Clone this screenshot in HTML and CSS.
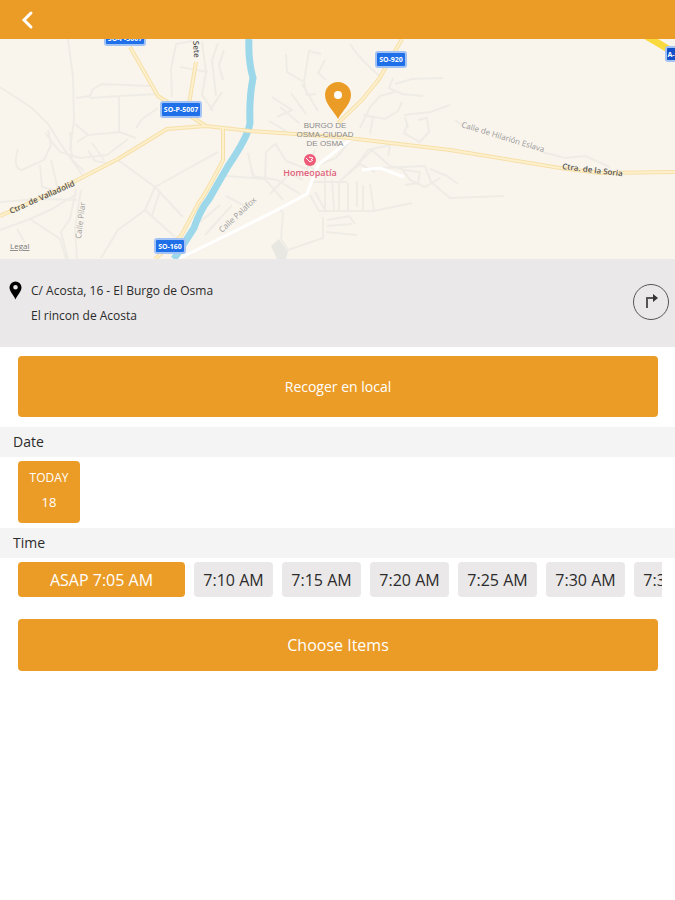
FILE: index.html
```
<!DOCTYPE html>
<html lang="es">
<head>
    <meta charset="UTF-8">
    <meta name="viewport" content="width=device-width, initial-scale=1.0">
    <title>Recoger en local</title>
    <link rel="stylesheet" href="styles.css">
</head>
<body>
    <header class="header">
        <button type="button" class="back-button" aria-label="Volver">
            <svg width="14" height="20" viewBox="0 0 14 20"><path d="M11 3 L4 10 L11 17"/></svg>
        </button>
    </header>
    <main>
        <section class="map" aria-label="Mapa">
            <svg class="map-canvas" viewBox="0 39 675 220" preserveAspectRatio="xMidYMid slice">
                <!-- Calles -->
                <g class="street">
                    <path d="M68 39 L73 77 L74 120 L70 150 M0 87 L32 108 L48 124 L60 143 L83 176 M76 98 L90 96 L93 89 L102 84 L150 86 M90 98 L119 96 L158 94 M119 96 V133 M75 124 L88 135 L120 132 L136 138 M88 135 L77 142 M136 128 L142 119 L158 108 M70 132 L72 160 L84 171"/>
                    <path d="M172 97 L171 69 L176 44 L192 41 M180 67 L208 72 M202 42 L206 72 L202 95 L213 111 M218 43 L212 60 L216 96 M224 50 L219 65 L223 80 M210 110 L222 92"/>
                    <path d="M18 149 Q12 168 22 170 L44 160 L51 145 L48 130 M40 165 L42 187 L54 190 M51 160 L58 190 M0 202 L40 199 L77 200 M0 230 L30 219 L50 210 L77 194 M17 229 L25 243 M30 219 L60 239 L66 259 M76 189 L70 219 L61 232 L68 259 M81 190 L75 228 L77 259 M45 133 L60 152 L80 158 L107 155 L128 139 M88 150 L95 161 L112 164 M92 143 L104 160 M118 160 L155 187 L183 217 M155 187 L180 173 L218 152 M155 187 L145 210 L118 230 L101 258 M145 210 L175 237 M160 190 L152 216"/>
                    <path d="M286 54 L287 72 L304 82 L309 51 L321 54 M304 82 L307 95 L316 94 M325 60 L318 73 L326 80 M272 97 L292 110 L277 117 M280 107 L299 123 M291 93 L306 114 M302 84 L318 111 M269 121 L289 133 M350 44 Q360 60 382 78 M393 78 L389 88 L402 94 L423 96 M395 84 L412 79 L443 78 M395 92 L380 96 L370 107 L360 128 M363 115 L385 119 L398 111 L402 102 M373 117 L370 134 M404 115 L430 112 L450 105 M408 128 L405 117 M418 120 L427 118 L429 132 L420 142 L404 133 L408 123"/>
                    <path d="M248 153 L253 176 L277 180 L300 194 M265 180 L266 152 L275 144 M275 143 L286 161 L307 169 L315 150 M283 200 L265 179 L226 176 M270 194 L290 173 L303 180 M318 175 L305 160 M316 166 L336 158 L351 140 M338 183 L355 167 L368 150 L390 145 L388 156 M347 175 L360 164 L375 172 M360 162 L372 150 L390 166 L402 169 L410 180 L425 187 L440 178 M404 170 L420 172 L418 183 L405 185 M310 182 L347 182 M315 192 L325 210 V176 M332 180 L334 210 M339 181 L339 211 M348 183 V211 M357 181 V207 M363 185 V211 M370 184 L374 211 M310 195 L319 211 L374 211 L412 203 M323 217 V238 L288 250 L281 239 L283 213 L279 208 M327 220 L350 216 M326 232 L357 235 M327 226 L352 224 M350 217 L355 224 M380 168 L425 166 L431 182 L450 198 L504 196 M430 169 L447 176 L458 184 M226 196 L245 206 M200 222 L220 205 M205 235 L232 205"/>
                    <path d="M455 120 L463 126 M542 152 L565 158 L585 156 L610 167"/>
                </g>
                <path class="plaza" d="M271 246 L279 239 L288 252 L286 259 H277 Z"/>
                <path class="lane" d="M178 259 L225 236 L275 211 L307 194 L318 165 L355 136 M362 170 L380 168 L404 177"/>
                <!-- Río -->
                <path class="river" d="M249 39 Q248 60 253 78 Q249 98 250 123 Q248 137 228 166 L209 199 Q200 210 194 228 L174 259"/>
                <!-- Carreteras -->
                <g class="road-edge">
                    <path d="M0 216 L60 189 L118 159 L167 129 L206 126 L250 131 L340 137 L450 150 L560 168 L600 173 L675 172"/>
                    <path d="M130 47 L158 96 L206 126 M196 62 L189 104 M223 128 V160 Q208 190 198 204 L181 236 L155 259 M402 39 L379 79 L362 100 L338 123"/>
                </g>
                <g class="road">
                    <path d="M0 216 L60 189 L118 159 L167 129 L206 126 L250 131 L340 137 L450 150 L560 168 L600 173 L675 172"/>
                    <path d="M130 47 L158 96 L206 126 M196 62 L189 104 M223 128 V160 Q208 190 198 204 L181 236 L155 259 M402 39 L379 79 L362 100 L338 123"/>
                </g>
                <path class="highway" d="M646 36 L675 53"/>
                <!-- Nombres de carreteras -->
                <g class="shield">
                    <rect x="105" y="30" width="40" height="15" rx="2"/>
                    <text x="125" y="41">SO-P-5007</text>
                    <rect x="161" y="102" width="40" height="15" rx="2"/>
                    <text x="181" y="112">SO-P-5007</text>
                    <rect x="376" y="52" width="30" height="15" rx="2"/>
                    <text x="391" y="62">SO-920</text>
                    <rect x="155" y="239" width="30" height="14" rx="2"/>
                    <text x="170" y="249">SO-160</text>
                    <rect class="motorway" x="666" y="47" width="20" height="14" rx="2"/>
                    <text x="675" y="57">A-11</text>
                </g>
                <g class="road-name">
                    <text transform="translate(11 214) rotate(-24)">Ctra. de Valladolid</text>
                    <text transform="translate(562 169) rotate(7)">Ctra. de la Soria</text>
                    <text transform="translate(193 41) rotate(86)">Sete</text>
                </g>
                <g class="street-name">
                    <text transform="translate(461 127) rotate(17)">Calle de Hilarión Eslava</text>
                    <text transform="translate(81 239) rotate(-83)">Calle Pilar</text>
                    <text transform="translate(222 233) rotate(-43)">Calle Palafox</text>
                </g>
                <g class="town">
                    <text x="325" y="128">BURGO DE</text>
                    <text x="325" y="137">OSMA-CIUDAD</text>
                    <text x="325" y="146">DE OSMA</text>
                </g>
                <g class="poi">
                    <circle cx="310" cy="160" r="6"/>
                    <path d="M306 158 l4 4 l3 -2 M309 157 l4 1 l-2 2"/>
                    <text x="310" y="176">Homeopatía</text>
                </g>
                <text class="legal" x="10" y="249">Legal</text>
                <path class="pin" d="M338 119 C334 111 325 104 325 95 A13 13 0 0 1 351 95 C351 104 342 111 338 119 Z"/>
                <circle class="pin-hole" cx="338" cy="95" r="4"/>
            </svg>
        </section>

        <section class="address">
            <svg class="address-icon" width="13" height="19" viewBox="0 0 13 19"><path fill-rule="evenodd" d="M6.500 18.500 C5 14.500 0.500 10.500 0.500 6.500 A6 6 0 0 1 12.500 6.500 C12.500 10.500 8 14.500 6.500 18.500 Z M6.500 4 a2.300 2.300 0 1 0 0 4.600 a2.300 2.300 0 0 0 0 -4.600 Z"/></svg>
            <div class="address-text">
                <p>C/ Acosta, 16 - El Burgo de Osma</p>
                <p>El rincon de Acosta</p>
            </div>
            <button type="button" class="directions-button" aria-label="Cómo llegar">
                <svg width="16" height="16" viewBox="0 0 16 16"><path class="turn" d="M4 14 V4 H11"/><path class="tip" d="M10 0 L15 4 L10 8 Z"/></svg>
            </button>
        </section>

        <button type="button" class="button pickup-button">Recoger en local</button>

        <h2>Date</h2>
        <div class="dates">
            <button type="button" class="date selected"><span>TODAY</span><span class="day">18</span></button>
        </div>

        <h2>Time</h2>
        <div class="times">
            <button type="button" class="time asap selected">ASAP 7:05 AM</button>
            <button type="button" class="time">7:10 AM</button>
            <button type="button" class="time">7:15 AM</button>
            <button type="button" class="time">7:20 AM</button>
            <button type="button" class="time">7:25 AM</button>
            <button type="button" class="time">7:30 AM</button>
            <button type="button" class="time">7:35 AM</button>
        </div>

        <button type="button" class="button choose-button">Choose Items</button>
    </main>
</body>
</html>
```
FILE: styles.css
```
/* Estilos generales */
* {
    box-sizing: border-box;
}

body {
    font-family: 'Open Sans', sans-serif;
    margin: 0;
    background-color: #fff;
    color: #2b2b2b;
}

button {
    font-family: inherit;
    border: none;
    padding: 0;
    cursor: pointer;
    color: inherit;
}

svg {
    display: block;
}

/* Encabezado */
.header {
    height: 39px;
    padding-left: 20px;
    background-color: #eb9c26;
    display: flex;
    align-items: center;
}

.back-button {
    background: none;
}

.back-button path {
    fill: none;
    stroke: #fff;
    stroke-width: 3;
    stroke-linecap: round;
}

/* Mapa */
.map {
    background-color: #f9f5ed;
}

.map-canvas {
    width: 100%;
    height: 220px;
}

.street {
    fill: none;
    stroke: #efece6;
    stroke-width: 2;
}

.lane {
    fill: none;
    stroke: #fff;
    stroke-width: 3;
}

.plaza {
    fill: #e9e7e1;
}

.river {
    fill: none;
    stroke: #9cd8ea;
    stroke-width: 7;
}

.road-edge {
    fill: none;
    stroke: #f7dfa8;
    stroke-width: 4;
}

.road {
    fill: none;
    stroke: #fdf0cd;
    stroke-width: 2;
}

.highway {
    stroke: #f9d93c;
    stroke-width: 7;
}

.shield rect {
    fill: #1e6fe8;
    stroke: #a4c3f5;
    stroke-width: 2;
}

.shield .motorway {
    fill: #1450c8;
}

.shield text {
    fill: #fff;
    font-size: 7px;
    font-weight: 700;
    text-anchor: middle;
}

.road-name {
    fill: #555;
    font-size: 8px;
    font-weight: 600;
}

.street-name {
    fill: #999;
    font-size: 8px;
}

.town {
    fill: #8c8c8c;
    font-family: 'Liberation Sans', sans-serif;
    font-size: 8px;
    text-anchor: middle;
}

.poi text {
    fill: #e0607a;
    font-size: 9px;
    font-weight: 600;
    text-anchor: middle;
}

.poi circle {
    fill: #ee5b78;
}

.poi path {
    fill: none;
    stroke: #fff;
}

.legal {
    fill: #777;
    font-size: 8px;
    text-decoration: underline;
}

.pin {
    fill: #eb9c26;
}

.pin-hole {
    fill: #fff;
}

/* Dirección */
.address {
    display: flex;
    align-items: flex-start;
    height: 88px;
    padding: 19px 6px 0 9px;
    background-color: #eae8e9;
}

.address-icon {
    margin-top: 3px;
}

.address-text {
    flex: 1;
    margin-left: 9px;
    font-size: 12px;
    line-height: 25px;
}

.address-text p {
    margin: 0;
}

.directions-button {
    display: flex;
    align-items: center;
    justify-content: center;
    width: 36px;
    height: 36px;
    margin-top: 6px;
    border: 1px solid #555;
    border-radius: 50%;
    background: none;
}

.turn {
    fill: none;
    stroke: #555;
    stroke-width: 2;
}

.tip {
    fill: #333;
}

/* Botones principales */
.button {
    display: block;
    width: calc(100% - 35px);
    margin-left: 18px;
    border-radius: 4px;
    background-color: #eb9c26;
    color: #fff;
}

.pickup-button {
    height: 61px;
    margin-top: 9px;
    margin-bottom: 10px;
    font-size: 14px;
}

.choose-button {
    height: 52px;
    margin-top: 22px;
    font-size: 16px;
}

h2 {
    margin: 0;
    padding-left: 13px;
    background-color: #f4f4f4;
    font-size: 14px;
    font-weight: 400;
    line-height: 30px;
}

/* Fecha y hora */
.dates {
    padding: 4px 18px 5px;
}

.date {
    display: flex;
    flex-direction: column;
    align-items: center;
    width: 62px;
    height: 62px;
    padding-top: 4px;
    border-radius: 4px;
    font-size: 12px;
    line-height: 25px;
}

.day {
    font-size: 13px;
}

.times {
    display: flex;
    gap: 9px;
    margin: 4px 13px 0 18px;
    overflow: hidden;
}

.time {
    flex: none;
    width: 79px;
    height: 35px;
    border-radius: 4px;
    background-color: #eae8e9;
    font-size: 16px;
}

.asap {
    width: 167px;
}

.selected {
    background-color: #eb9c26;
    color: #fff;
}
```
